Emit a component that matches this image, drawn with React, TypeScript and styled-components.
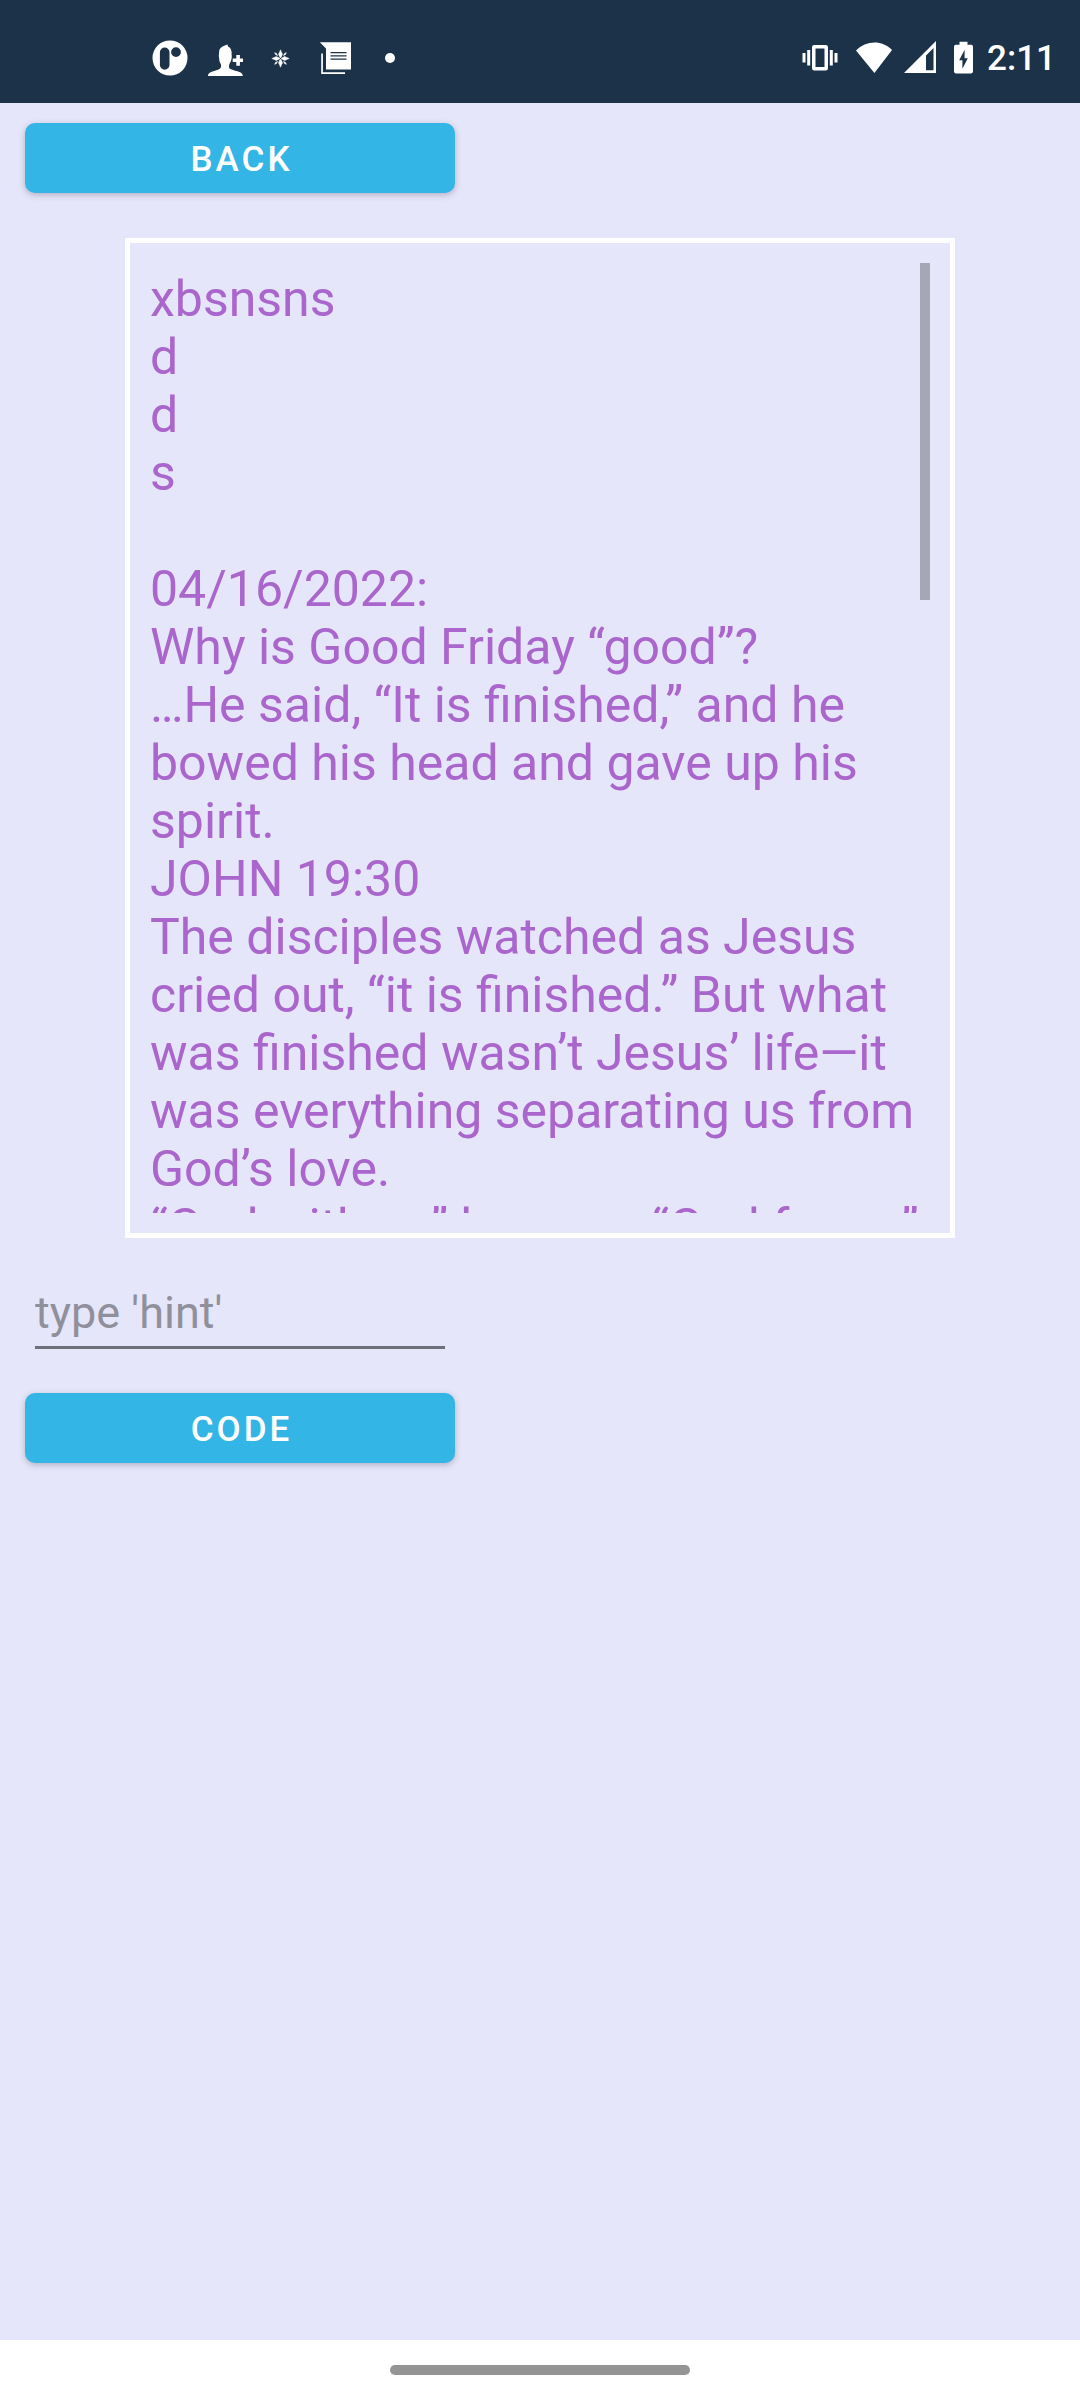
import React from "react";
import styled, { createGlobalStyle } from "styled-components";

const GlobalStyle = createGlobalStyle`
  *, *::before, *::after { box-sizing: border-box; }
  body { margin: 0; background: #e6e6fa; }
`;

const Screen = styled.div`
  display: flex;
  flex-direction: column;
  min-height: 100vh;
  font-family: Roboto, "Noto Sans", sans-serif;
  background: #e6e6fa;
`;

const StatusBar = styled.header`
  display: flex;
  align-items: center;
  justify-content: space-between;
  height: 103px;
  padding: 13px 24px 0 152px;
  background: #1c3248;
  color: #fff;
`;

const IconRow = styled.div<{ $gap: number }>`
  display: flex;
  align-items: center;
  gap: ${(p) => p.$gap}px;
`;

const Clock = styled.time`
  padding-top: 2px;
  font-size: 35px;
  line-height: 40px;
  font-weight: 500;
`;

const Icon = styled.svg<{ $width?: number }>`
  display: block;
  flex: none;
  width: ${(p) => p.$width ?? 36}px;
  height: 36px;
  fill: currentColor;
`;

const Content = styled.main`
  display: flex;
  flex: 1;
  flex-direction: column;
  align-items: flex-start;
  padding: 20px 25px;
`;

const Button = styled.button`
  width: 430px;
  max-width: 100%;
  height: 70px;
  padding: 3px 0 0 3px;
  border: 0;
  border-radius: 10px;
  background: #33b5e5;
  box-shadow: 0 2px 6px rgba(60, 50, 80, 0.3);
  color: #fff;
  font: 500 35px/40px Roboto, "Noto Sans", sans-serif;
  letter-spacing: 3px;
  text-transform: uppercase;
`;

const LogFrame = styled.section`
  align-self: stretch;
  margin: 45px 100px 48px;
  padding: 20px;
  border: 5px solid #fff;
`;

const LogViewport = styled.div`
  position: relative;
  height: 950px;
  padding-top: 7px;
  overflow: hidden;
`;

const LogLine = styled.p`
  min-height: 58px;
  margin: 0;
  color: #aa66cc;
  font-size: 50px;
  line-height: 58px;
`;

const ScrollThumb = styled.div`
  position: absolute;
  top: 0;
  right: 0;
  width: 10px;
  height: 337px;
  background: #a6a6b4;
`;

const HintInput = styled.input`
  width: 410px;
  max-width: 100%;
  height: 63px;
  margin: 0 10px 44px;
  padding: 0 0 7px;
  border: 0;
  border-bottom: 3px solid #70707a;
  border-radius: 0;
  outline: 0;
  background: transparent;
  color: #222;
  font: 400 45px/53px Roboto, "Noto Sans", sans-serif;

  &::placeholder {
    color: #90909c;
    opacity: 1;
  }
`;

const NavBar = styled.footer`
  display: flex;
  align-items: center;
  justify-content: center;
  height: 60px;
  background: #fff;
`;

const HomeHandle = styled.div`
  width: 300px;
  height: 10px;
  border-radius: 5px;
  background: #949494;
`;

const lines = [
  "xbsnsns",
  "d",
  "d",
  "s",
  "",
  "04/16/2022:",
  "Why is Good Friday “good”?",
  "…He said, “It is finished,” and he bowed his head and gave up his spirit.",
  "JOHN 19:30",
  "The disciples watched as Jesus cried out, “it is finished.” But what was finished wasn’t Jesus’ life—it was everything separating us from God’s love.",
  "“God with us” became “God for us”",
];

const AppLogoIcon = () => (
  <Icon viewBox="0 0 36 36" aria-hidden="true">
    <path
      fillRule="evenodd"
      d="M18 .5a17.5 17.5 0 1 0 0 35a17.5 17.5 0 1 0 0-35zM12.7 7.5a4.8 4.8 0 0 1 4.8 4.8v12.6a4.8 4.8 0 0 1-9.6 0v-12.6a4.8 4.8 0 0 1 4.8-4.8zM24 7.2a4.9 4.9 0 1 1 0 9.8a4.9 4.9 0 1 1 0-9.8z"
    />
  </Icon>
);

const AddPersonIcon = () => (
  <Icon viewBox="0 0 36 36" aria-hidden="true">
    <path d="M1 38V35.5C1 31.500 9 31 12.500 29C14.500 27.500 14.500 25.500 13.500 23.500C12.500 22 12.300 20.500 12.200 18.500C11.500 16 12 14 12.200 11C12.800 7 17 5.500 20.500 4.500L21 6.500C24 8 25 11 24.500 14C25.200 17 24.500 19 23.800 21.500C22 24 21.500 26.500 22.500 28.500C26 31 35.700 31 35.700 35.500V38z" />
    <path d="M29.300 15h3.600v3.600h3.600v3.500h-3.600v3.600h-3.600v-3.600h-3.600v-3.500h3.600z" />
  </Icon>
);

const SparkleIcon = () => (
  <Icon viewBox="0 0 36 36" aria-hidden="true">
    {[0, 90, 180, 270].map((angle) => (
      <g key={angle} transform={`rotate(${angle} 18.500 18.500)`}>
        <path d="M18.500 9.800l1 2.500l1 1.800l-1 2.400l-1 1.500l-1-1.500l-1-2.400l1-1.800z" stroke="currentColor" strokeWidth=".5" />
        <path d="M21.500 15.500l1-2l1.800-.8l-.8 1.800z" stroke="currentColor" strokeWidth=".6" />
      </g>
    ))}
  </Icon>
);

const NotesIcon = () => (
  <Icon viewBox="0 0 36 36" aria-hidden="true">
    <path
      fillRule="evenodd"
      d="M2.800 2.200H34V29.500H9V8.500zM13.500 12v1.300H29.500V12zM13.500 15.200v1.300H29.500v-1.300zM13.500 18.400v1.300H29.500v-1.300z"
    />
    <path d="M4.200 13.500h1.700V32.200H28v1.700H4.200z" />
  </Icon>
);

const MoreDotIcon = () => (
  <Icon viewBox="0 0 36 36" aria-hidden="true">
    <circle cx="18" cy="18" r="5" />
  </Icon>
);

const VibrateIcon = () => (
  <Icon $width={42} viewBox="0 0 42 36" aria-hidden="true">
    <path
      fillRule="evenodd"
      d="M12.300 5h11.400a2.300 2.300 0 0 1 2.300 2.300v20.900a2.300 2.300 0 0 1-2.300 2.300H12.300a2.300 2.300 0 0 1-2.300-2.300V7.300A2.300 2.300 0 0 1 12.300 5zM13.500 8.500V27h9V8.500z"
    />
    <path d="M5.200 10h3v15.600h-3zM.5 13h3v9.600h-3zM27.800 10h3v15.600h-3zM32.500 13h3v9.600h-3z" />
  </Icon>
);

const WifiIcon = () => (
  <Icon viewBox="0 0 36 36" aria-hidden="true">
    <path d="M18.400 33L0 10.500C10 -.2 26.500 -.2 36 9.900z" />
  </Icon>
);

const SignalIcon = () => (
  <Icon $width={38} viewBox="0 0 38 36" aria-hidden="true">
    <path fillRule="evenodd" d="M0 33L32 1V33zM29.500 8L22 15.500V30.200H29.500z" />
  </Icon>
);

const BatteryIcon = () => (
  <Icon $width={21} viewBox="0 0 21 36" aria-hidden="true">
    <path
      fillRule="evenodd"
      d="M5.500 1.800h8v3h3.700a1.800 1.800 0 0 1 1.800 1.800v25a1.800 1.800 0 0 1-1.800 1.800H1.800A1.800 1.800 0 0 1 0 31.600v-25a1.800 1.800 0 0 1 1.800-1.800h3.700zM10.600 9.700L5.200 20.300h3.200v8.500L13.800 18.200h-3.200z"
    />
  </Icon>
);

export default function App() {
  return (
    <Screen>
      <GlobalStyle />
      <StatusBar>
        <IconRow $gap={19}>
          <AppLogoIcon />
          <AddPersonIcon />
          <SparkleIcon />
          <NotesIcon />
          <MoreDotIcon />
        </IconRow>
        <IconRow $gap={12}>
          <VibrateIcon />
          <WifiIcon />
          <SignalIcon />
          <BatteryIcon />
          <Clock>2:11</Clock>
        </IconRow>
      </StatusBar>
      <Content>
        <Button type="button">Back</Button>
        <LogFrame>
          <LogViewport>
            {lines.map((line, i) => (
              <LogLine key={i}>{line}</LogLine>
            ))}
            <ScrollThumb />
          </LogViewport>
        </LogFrame>
        <HintInput type="text" placeholder="type 'hint'" aria-label="Code hint" />
        <Button type="button">Code</Button>
      </Content>
      <NavBar>
        <HomeHandle />
      </NavBar>
    </Screen>
  );
}
